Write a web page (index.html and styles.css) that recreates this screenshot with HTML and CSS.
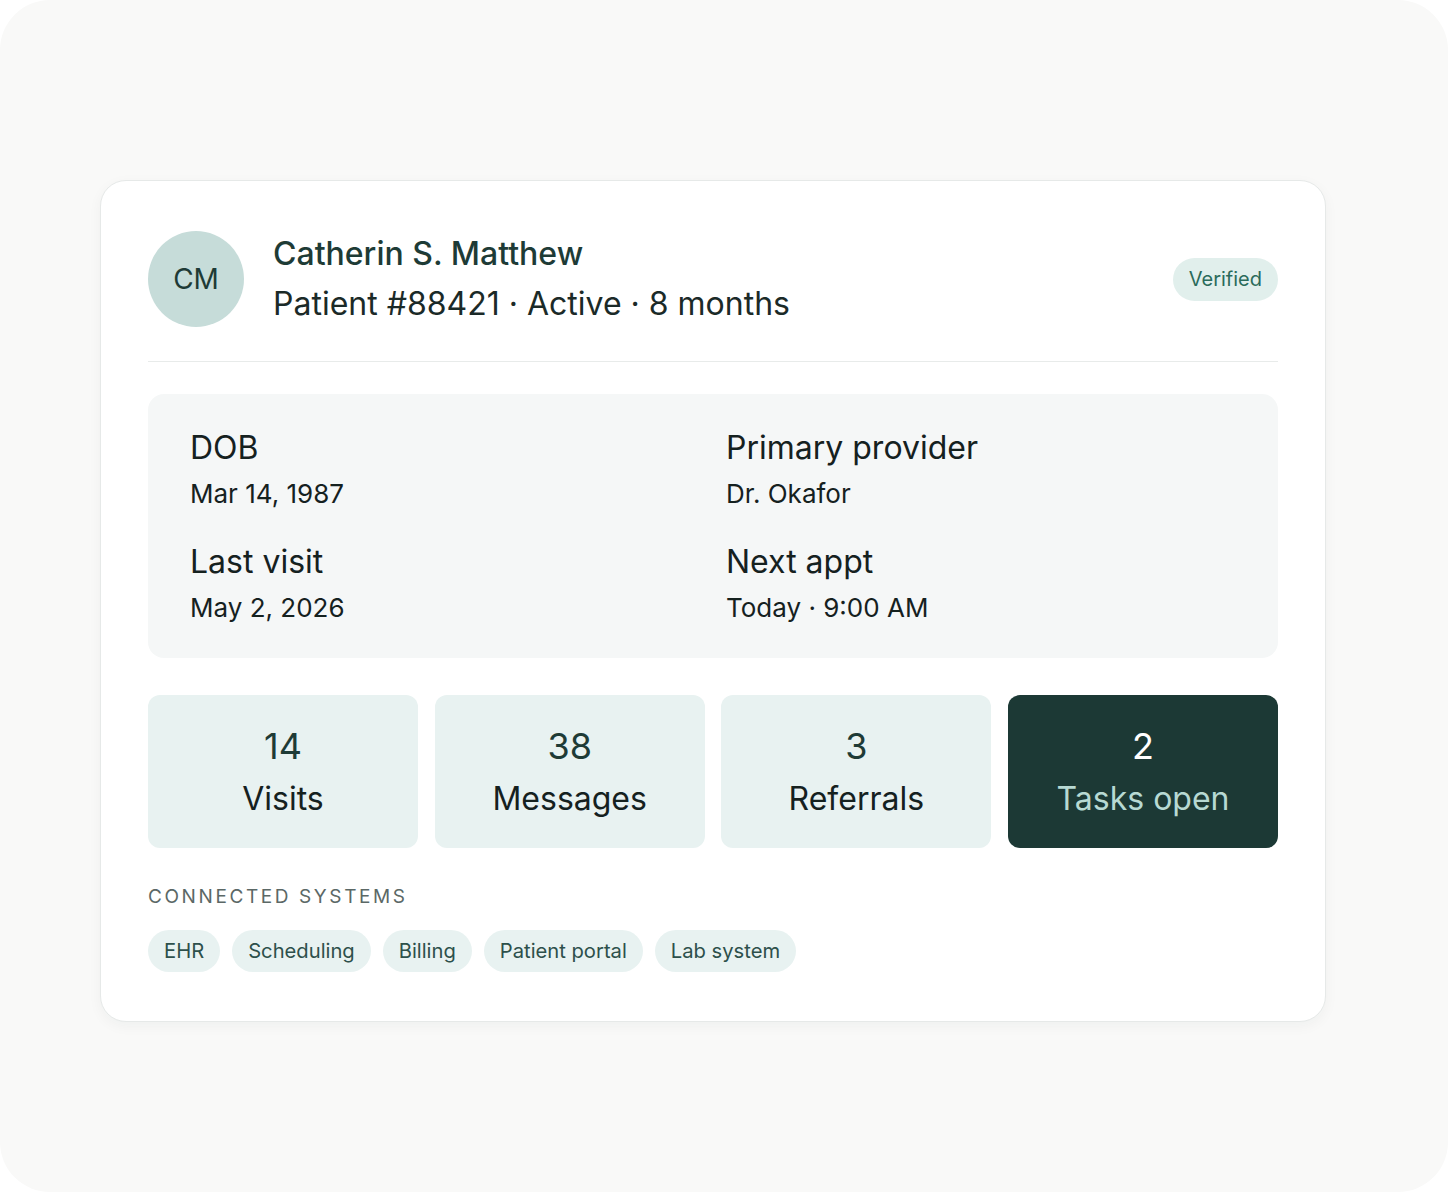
FILE: index.html
```html
<!DOCTYPE html>
<html lang="en">
<head>
<meta charset="utf-8">
<title>Patient card</title>
<link rel="stylesheet" href="styles.css">
</head>
<body>
<div class="frame">
  <div class="card">
    <div class="header">
      <div class="avatar">CM</div>
      <div class="identity">
        <div class="name">Catherin S. Matthew</div>
        <div class="meta">Patient #88421 · Active · 8 months</div>
      </div>
      <span class="badge">Verified</span>
    </div>
    <div class="details">
      <div class="field">
        <div class="label">DOB</div>
        <div class="value">Mar 14, 1987</div>
      </div>
      <div class="field">
        <div class="label">Primary provider</div>
        <div class="value">Dr. Okafor</div>
      </div>
      <div class="field">
        <div class="label">Last visit</div>
        <div class="value">May 2, 2026</div>
      </div>
      <div class="field">
        <div class="label">Next appt</div>
        <div class="value">Today · 9:00 AM</div>
      </div>
    </div>
    <div class="stats">
      <div class="stat"><div class="num">14</div><div class="stat-label">Visits</div></div>
      <div class="stat"><div class="num">38</div><div class="stat-label">Messages</div></div>
      <div class="stat"><div class="num">3</div><div class="stat-label">Referrals</div></div>
      <div class="stat stat-dark"><div class="num">2</div><div class="stat-label">Tasks open</div></div>
    </div>
    <div class="section-title">CONNECTED SYSTEMS</div>
    <div class="chips">
      <span class="chip">EHR</span>
      <span class="chip">Scheduling</span>
      <span class="chip">Billing</span>
      <span class="chip">Patient portal</span>
      <span class="chip">Lab system</span>
    </div>
  </div>
</div>
</body>
</html>
```

FILE: styles.css
```css
* { box-sizing: border-box; }
html, body { margin: 0; padding: 0; background: #ffffff; }
body {
  font-family: Inter, "Noto Sans", "Liberation Sans", sans-serif;
  color: #1b2a28;
}
.frame {
  width: 1448px;
  height: 1192px;
  background: #f9f9f8;
  border-radius: 50px;
  padding: 180px 0 0 100px;
}
.card {
  width: 1226px;
  background: #ffffff;
  border: 1px solid #e6e9e8;
  border-radius: 26px;
  box-shadow: 0 4px 14px rgba(20, 40, 36, 0.045);
  padding: 48px 47px 49px 47px;
}
.header {
  display: flex;
  align-items: center;
  gap: 29px;
  padding-bottom: 32px;
  border-bottom: 1px solid #e8ebea;
}
.avatar {
  width: 96px;
  height: 96px;
  border-radius: 50%;
  background: #c6dcd9;
  color: #1e3b36;
  font-size: 28px;
  display: flex;
  align-items: center;
  justify-content: center;
  flex-shrink: 0;
}
.identity { flex: 1; }
.name {
  font-size: 32px;
  line-height: 50px;
  font-weight: 500;
  color: #1e3b36;
}
.meta {
  font-size: 32px;
  line-height: 50px;
  color: #1b2a28;
}
.badge {
  background: #e1efec;
  color: #2b6b5b;
  font-size: 20px;
  line-height: 27px;
  padding: 8px 16px;
  border-radius: 22px;
}
.details {
  margin-top: 32px;
  background: #f5f7f7;
  border-radius: 16px;
  padding: 34px 42px 32px 42px;
  display: grid;
  grid-template-columns: 1fr 1fr;
  column-gap: 26px;
  row-gap: 30px;
}
.label {
  font-size: 32px;
  line-height: 40px;
  color: #15211f;
}
.value {
  margin-top: 8px;
  font-size: 26px;
  line-height: 36px;
  color: #15211f;
}
.stats {
  margin-top: 37px;
  display: grid;
  grid-template-columns: repeat(4, 1fr);
  gap: 16.7px;
}
.stat {
  background: #e8f2f1;
  border-radius: 12px;
  padding: 28px 10px 29px;
  text-align: center;
}
.num {
  font-size: 36px;
  line-height: 46px;
  color: #1e3b36;
}
.stat-label {
  margin-top: 10px;
  font-size: 32px;
  line-height: 40px;
  color: #15211f;
}
.stat-dark { background: #1c3935; }
.stat-dark .num { color: #ffffff; }
.stat-dark .stat-label { color: #b7d9d3; }
.section-title {
  margin-top: 37px;
  font-size: 19px;
  line-height: 24px;
  letter-spacing: 2.6px;
  color: #5b6866;
}
.chips {
  margin-top: 21px;
  display: flex;
  gap: 12px;
}
.chip {
  background: #e8f2f1;
  color: #2d504b;
  font-size: 20.2px;
  line-height: 26px;
  padding: 8px 16px;
  border-radius: 21px;
}
```
